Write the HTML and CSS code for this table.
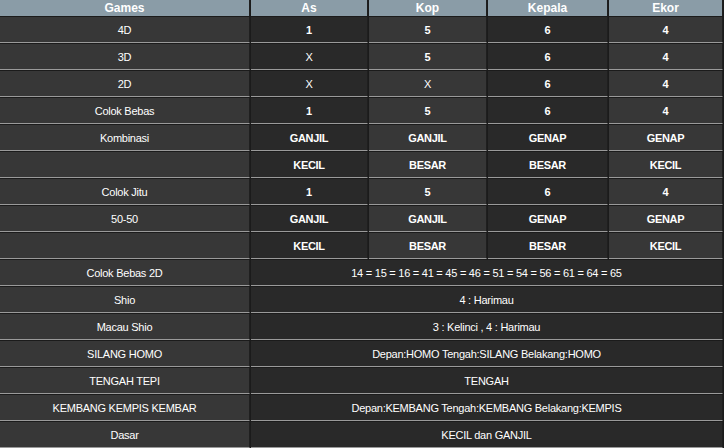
FILE: index.html
```html
<!DOCTYPE html>
<html>
<head>
<meta charset="utf-8">
<link rel="stylesheet" href="styles.css">
</head>
<body>
<div class="wrap">
<table class="result">
  <colgroup>
    <col class="c-games"><col class="c-as"><col class="c-kop"><col class="c-kepala"><col class="c-ekor">
  </colgroup>
  <thead>
    <tr><th>Games</th><th>As</th><th>Kop</th><th>Kepala</th><th>Ekor</th></tr>
  </thead>
  <tbody>
    <tr><td class="lbl">4D</td><td class="v dk">1</td><td class="v">5</td><td class="v dk">6</td><td class="v">4</td></tr>
    <tr><td class="lbl">3D</td><td class="dk">X</td><td class="v">5</td><td class="v dk">6</td><td class="v">4</td></tr>
    <tr><td class="lbl">2D</td><td class="dk">X</td><td>X</td><td class="v dk">6</td><td class="v">4</td></tr>
    <tr><td class="lbl">Colok Bebas</td><td class="v dk">1</td><td class="v">5</td><td class="v dk">6</td><td class="v">4</td></tr>
    <tr><td class="lbl">Kombinasi</td><td class="v dk">GANJIL</td><td class="v">GANJIL</td><td class="v dk">GENAP</td><td class="v">GENAP</td></tr>
    <tr><td class="lbl"></td><td class="v dk">KECIL</td><td class="v">BESAR</td><td class="v dk">BESAR</td><td class="v">KECIL</td></tr>
    <tr><td class="lbl">Colok Jitu</td><td class="v dk">1</td><td class="v">5</td><td class="v dk">6</td><td class="v">4</td></tr>
    <tr><td class="lbl">50-50</td><td class="v dk">GANJIL</td><td class="v">GANJIL</td><td class="v dk">GENAP</td><td class="v">GENAP</td></tr>
    <tr><td class="lbl"></td><td class="v dk">KECIL</td><td class="v">BESAR</td><td class="v dk">BESAR</td><td class="v">KECIL</td></tr>
    <tr><td class="lbl">Colok Bebas 2D</td><td class="dk" colspan="4">14 = 15 = 16 = 41 = 45 = 46 = 51 = 54 = 56 = 61 = 64 = 65</td></tr>
    <tr><td class="lbl">Shio</td><td class="dk" colspan="4">4 : Harimau</td></tr>
    <tr><td class="lbl">Macau Shio</td><td class="dk" colspan="4">3 : Kelinci , 4 : Harimau</td></tr>
    <tr><td class="lbl">SILANG HOMO</td><td class="dk" colspan="4">Depan:HOMO Tengah:SILANG Belakang:HOMO</td></tr>
    <tr><td class="lbl">TENGAH TEPI</td><td class="dk" colspan="4">TENGAH</td></tr>
    <tr><td class="lbl">KEMBANG KEMPIS KEMBAR</td><td class="dk" colspan="4">Depan:KEMBANG Tengah:KEMBANG Belakang:KEMPIS</td></tr>
    <tr><td class="lbl">Dasar</td><td class="dk" colspan="4">KECIL dan GANJIL</td></tr>
  </tbody>
</table>
</div>
</body>
</html>
```
FILE: styles.css
```css
html, body {
  margin: 0;
  padding: 0;
  background: #1b1b1b;
}
.wrap {
  width: 724px;
  height: 448px;
  overflow: hidden;
}
.result {
  table-layout: fixed;
  border-collapse: separate;
  border-spacing: 1px;
  margin: -1px 0 0 -1px;
  width: 725px;
  background: #1b1b1b;
  font-family: "Liberation Sans", Arial, sans-serif;
  font-size: 11px;
  letter-spacing: -0.25px;
  color: #ffffff;
}
.c-games { width: 250px; }
.c-as { width: 117px; }
.c-kop { width: 118px; }
.c-kepala { width: 120px; }
.c-ekor { width: 114px; }
.result th {
  height: 16px;
  padding: 0;
  background: #8a9ca7;
  font-size: 12px;
  letter-spacing: 0;
  font-weight: bold;
  line-height: 15px;
  text-align: center;
  border-right: 1px solid #1f1f1f;
  box-sizing: border-box;
}
.result td {
  height: 26px;
  padding: 0 0 0 0;
  box-sizing: border-box;
  background: #373737;
  text-align: center;
  vertical-align: middle;
  border-bottom: 1px solid #9a9a9a;
  border-right: 1px solid #1f1f1f;
  line-height: 14px;
}
.result td.dk {
  background: #292929;
}
.result td.v {
  font-weight: bold;
  letter-spacing: -0.3px;
}
```
